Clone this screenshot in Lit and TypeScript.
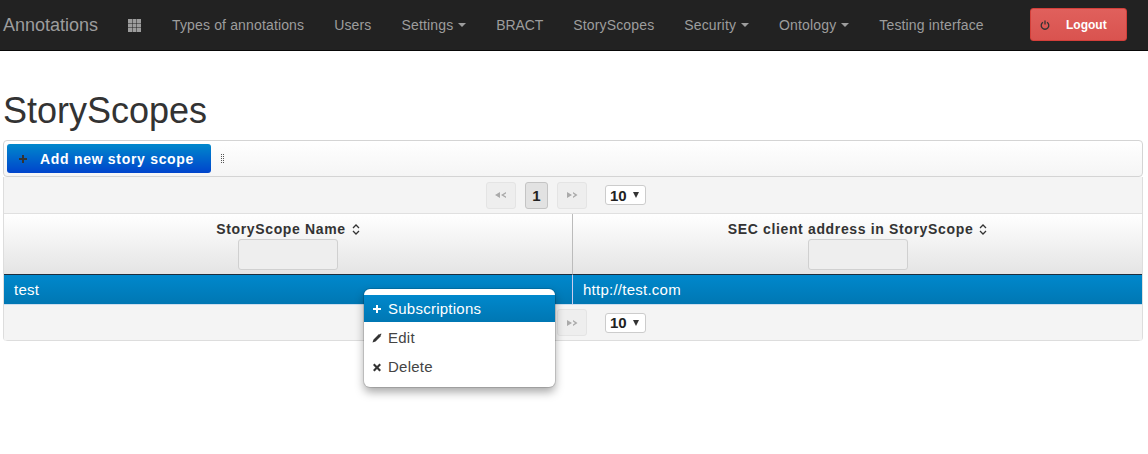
import { LitElement, html, css } from "lit";
import { customElement } from "lit/decorators.js";

const first = html`<svg class="pg-ic" viewBox="0 0 12 8" width="12" height="8"><path d="M0 4L5 1v6zM6 4l5-3v1.400L8.500 4 11 5.600V7z"/></svg>`;
const next = html`<svg class="pg-ic" viewBox="0 0 12 8" width="12" height="8"><path d="M1 1l5 3-5 3zM7 1l4.500 3L7 7V5.600L9 4 7 2.400z"/></svg>`;
const sort = html`<svg class="sort" viewBox="0 0 8 11" width="8" height="11"><path d="M1 4l3-3 3 3M1 7l3 3 3-3" fill="none" stroke="#333" stroke-width="1.300"/></svg>`;

@customElement("app-root")
export class AppRoot extends LitElement {
  static styles = css`
    :host { display: block; position: relative; height: 454px; overflow: hidden; background: #fff; color: #333; font-family: "Liberation Sans", Arial, sans-serif; font-size: 14px; }
    .nav { height: 50px; background: #222; border-bottom: 1px solid #080808; display: flex; align-items: center; color: #9d9d9d; padding-left: 3px; }
    .brand { font-size: 18px; width: 125px; display: block; }
    .grid { display: block; margin-right: 31px; }
    .links { display: flex; gap: 30px; width: 858px; letter-spacing: 0.15px; }
    .links span { display: flex; align-items: center; white-space: nowrap; }
    .links .tight { letter-spacing: -0.1px; }
    .caret { display: inline-block; margin-left: 5px; border-top: 4px solid currentColor; border-left: 4px solid transparent; border-right: 4px solid transparent; }
    .logout { box-sizing: border-box; width: 97px; height: 33px; align-self: flex-start; margin-top: 8px; background: linear-gradient(#e0605c, #d9534f); border: 1px solid #d43f3a; border-radius: 3px; color: #fff; font-weight: bold; font-size: 12px; display: flex; align-items: center; padding-left: 9px; gap: 16px; }
    .main { padding: 0 5px 0 3px; }
    h1 { margin: 0; padding-top: 40px; height: 49px; font-size: 36px; line-height: 40px; font-weight: 500; }
    .toolbar { box-sizing: border-box; height: 37px; border: 1px solid #d4d4d4; border-radius: 4px; background: linear-gradient(#fff, #f5f5f5); display: flex; align-items: center; padding-left: 3px; }
    .add { box-sizing: border-box; width: 204px; height: 29px; border-radius: 3px; background: linear-gradient(#0088cc, #0044cc); color: #fff; font-weight: bold; font-size: 14px; letter-spacing: 0.7px; display: flex; align-items: center; padding-left: 11px; gap: 12px; }
    .add svg { flex: none; }
    .sep { margin-left: 10px; width: 3px; height: 10px; background:
      repeating-linear-gradient(#555 0 1px, transparent 1px 2px) left / 1px 100% no-repeat,
      repeating-linear-gradient(#555 0 1px, transparent 1px 2px) right / 1px 100% no-repeat; }
    .table { border-left: 1px solid #ddd; border-right: 1px solid #ddd; border-radius: 0 0 4px 4px; overflow: hidden; }
    .pager { height: 37px; box-sizing: border-box; background: #f4f4f4; display: flex; align-items: center; justify-content: center; border-bottom: 1px solid #e0e0e0; padding-right: 14px; }
    .foot .pager { height: 35px; border-bottom: 0; }
    .pg-btn { box-sizing: border-box; width: 30px; height: 27px; background: #eee; border: 1px solid #e4e4e4; border-radius: 3px; display: flex; align-items: center; justify-content: center; }
    .pg-ic { fill: #aaa; }
    .cur { box-sizing: border-box; width: 23px; height: 27px; margin: 0 9px; background: #e2e2e2; border: 1px solid #c4c4c4; border-radius: 3px; font-weight: bold; font-size: 15px; color: #222; display: flex; align-items: center; justify-content: center; }
    .size { box-sizing: border-box; width: 41px; height: 20px; margin-left: 18px; background: #fff; border: 1px solid #ccc; border-radius: 3px; font-weight: bold; font-size: 15px; color: #222; display: flex; align-items: center; justify-content: space-between; padding: 0 6px 0 4px; }
    .size i { border-top: 6px solid #333; border-left: 3px solid transparent; border-right: 3px solid transparent; }
    .cols { display: grid; grid-template-columns: 568px 1fr; }
    .th { height: 61px; box-sizing: border-box; background: linear-gradient(#fff, #e4e4e4); border-bottom: 1px solid #1d2d3d; display: flex; flex-direction: column; align-items: center; padding-top: 7px; font-weight: bold; letter-spacing: 0.65px; }
    .th + .th { border-left: 1px solid #bbb; }
    .lbl { display: flex; align-items: center; gap: 6px; line-height: 17px; }
    .filter { box-sizing: border-box; width: 100px; height: 31px; margin-top: 1px; border: 1px solid #d0d0d0; border-radius: 3px; background: #eee; }
    .td { height: 30px; box-sizing: border-box; background: linear-gradient(#0088cc, #0077b3); color: #fff; display: flex; align-items: center; padding-left: 10px; font-size: 15px; letter-spacing: 0.25px; border-bottom: 1px solid #cde; }
    .td + .td { border-left: 1px solid #cce; }
    .foot { border-bottom: 1px solid #ddd; border-radius: 0 0 4px 4px; }
    .menu { position: absolute; left: 364px; top: 289px; width: 191px; height: 98px; box-sizing: border-box; background: #fff; border-radius: 6px; box-shadow: 0 0 0 1px rgba(0,0,0,.12), 0 5px 10px rgba(0,0,0,.35); padding-top: 6px; display: flex; flex-direction: column; overflow: hidden; }
    .mi { height: 29px; display: flex; align-items: center; gap: 6px; padding: 2px 0 0 8px; box-sizing: border-box; color: #444; font-size: 15px; letter-spacing: 0.25px; }
    .mi.on { height: 27px; padding-top: 0; background: linear-gradient(#0088cc, #0077b3); color: #fff; }
    .mi svg { flex: none; }
  `;
  render() {
    return html`
      <div class="nav">
        <span class="brand">Annotations</span>
        <svg class="grid" viewBox="0 0 13 13" width="13" height="13" fill="#9d9d9d"><path d="M0 0h4v4H0zM4.500 0h4v4h-4zM9 0h4v4H9zM0 4.500h4v4H0zM4.500 4.500h4v4h-4zM9 4.500h4v4H9zM0 9h4v4H0zM4.500 9h4v4h-4zM9 9h4v4H9z"/></svg>
        <div class="links">
          <span>Types of annotations</span><span>Users</span>
          <span>Settings<b class="caret"></b></span><span class="tight">BRACT</span><span>StoryScopes</span>
          <span>Security<b class="caret"></b></span><span>Ontology<b class="caret"></b></span><span>Testing interface</span>
        </div>
        <div class="logout">
          <svg viewBox="0 0 10 10" width="10" height="10"><path d="M3 2.200a3.800 3.800 0 1 0 4 0M5 .5v4" fill="none" stroke="#333" stroke-width="1.300"/></svg>
          <span>Logout</span>
        </div>
      </div>
      <div class="main">
        <h1>StoryScopes</h1>
        <div class="toolbar">
          <div class="add">
            <svg viewBox="0 0 10 10" width="10" height="10"><path d="M4 1h2v3h3v2H6v3H4V6H1V4h3z" fill="#333"/></svg>
            <span>Add new story scope</span>
          </div>
          <div class="sep"></div>
        </div>
        <div class="table">
          ${this.pager()}
          <div class="cols">
            <div class="th"><div class="lbl">StoryScope Name ${sort}</div><div class="filter"></div></div>
            <div class="th"><div class="lbl">SEC client address in StoryScope ${sort}</div><div class="filter"></div></div>
            <div class="td">test</div>
            <div class="td">http://test.com</div>
          </div>
          <div class="foot">${this.pager()}</div>
        </div>
      </div>
      <div class="menu">
        <div class="mi on"><svg viewBox="0 0 10 10" width="10" height="10"><path d="M4 1h2v3h3v2H6v3H4V6H1V4h3z" fill="#fff"/></svg>Subscriptions</div>
        <div class="mi"><svg viewBox="0 0 10 10" width="10" height="10"><path d="M.500 9.500l1-3L7 1l.500.500L9 .500l.500.500-1 1.500.500.500-5.500 5.500z" fill="#333"/></svg>Edit</div>
        <div class="mi"><svg viewBox="0 0 10 10" width="10" height="10"><path d="M2.500 1.500L5 4l2.500-2.500 1.500 1.500L6.500 5.500 9 8 7.500 9.500 5 7 2.500 9.500 1 8l2.500-2.500L1 3z" fill="#333"/></svg>Delete</div>
      </div>
    `;
  }
  pager() {
    return html`<div class="pager">
      <div class="pg-btn">${first}</div><div class="cur">1</div><div class="pg-btn">${next}</div>
      <div class="size">10<i></i></div>
    </div>`;
  }
}
